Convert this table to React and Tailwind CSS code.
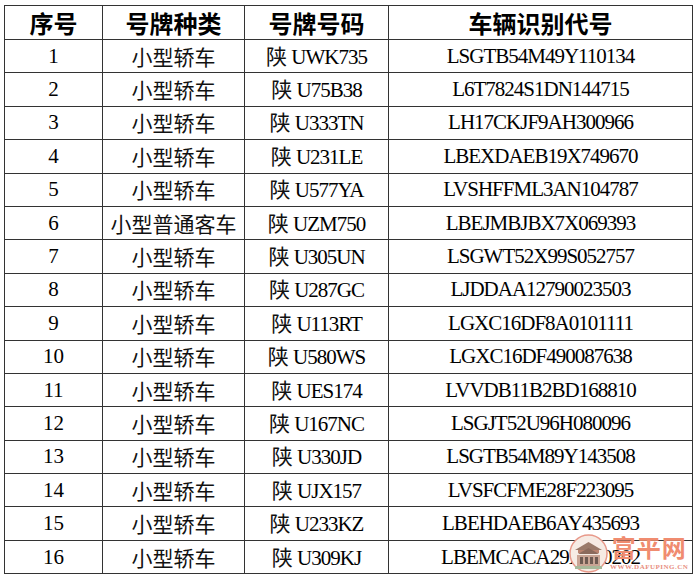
import React from 'react';

const rows = [
  ['1', '小型轿车', 'UWK735', 'LSGTB54M49Y110134'],
  ['2', '小型轿车', 'U75B38', 'L6T7824S1DN144715'],
  ['3', '小型轿车', 'U333TN', 'LH17CKJF9AH300966'],
  ['4', '小型轿车', 'U231LE', 'LBEXDAEB19X749670'],
  ['5', '小型轿车', 'U577YA', 'LVSHFFML3AN104787'],
  ['6', '小型普通客车', 'UZM750', 'LBEJMBJBX7X069393'],
  ['7', '小型轿车', 'U305UN', 'LSGWT52X99S052757'],
  ['8', '小型轿车', 'U287GC', 'LJDDAA12790023503'],
  ['9', '小型轿车', 'U113RT', 'LGXC16DF8A0101111'],
  ['10', '小型轿车', 'U580WS', 'LGXC16DF490087638'],
  ['11', '小型轿车', 'UES174', 'LVVDB11B2BD168810'],
  ['12', '小型轿车', 'U167NC', 'LSGJT52U96H080096'],
  ['13', '小型轿车', 'U330JD', 'LSGTB54M89Y143508'],
  ['14', '小型轿车', 'UJX157', 'LVSFCFME28F223095'],
  ['15', '小型轿车', 'U233KZ', 'LBEHDAEB6AY435693'],
  ['16', '小型轿车', 'U309KJ', 'LBEMCACA29X140202'],
];

const cjk = "font-['Noto_Sans_CJK_SC',sans-serif]";
const serif = "font-['Liberation_Serif','Noto_Sans_CJK_SC',serif]";

function Watermark() {
  return (
    <div className="absolute left-[569px] top-[534px] flex items-start gap-[2px] pointer-events-none">
      <svg width="39" height="39" viewBox="0 0 39 39">
        <circle cx="19.5" cy="19.5" r="18.5" fill="#f6ebe4" stroke="#e8998a" strokeWidth="1.5" />
        <path d="M6 16 L19.5 8 L33 16 Z" fill="#9a7a6a" />
        <rect x="9" y="16" width="21" height="3" fill="#b9826e" />
        <path d="M9 20 L19.5 14 L30 20 Z" fill="#8b6a5c" />
        <rect x="8" y="21" width="23" height="11" fill="#c9a494" />
        <rect x="11" y="23" width="3" height="7" fill="#6e5a52" />
        <rect x="16" y="23" width="3" height="7" fill="#6e5a52" />
        <rect x="21" y="23" width="3" height="7" fill="#6e5a52" />
        <rect x="26" y="23" width="3" height="7" fill="#6e5a52" />
        <rect x="6" y="32" width="27" height="3" fill="#a8b89a" />
      </svg>
      <div className="flex flex-col items-center">
        <span className={`${cjk} font-bold text-[24px] leading-[26px] text-[#f08c70] tracking-[1px]`}>富平网</span>
        <span className={`${serif} font-bold text-[7px] leading-[9px] text-[#e88e80] tracking-[0.5px] mt-[3px]`}>WWW.DAFUPING.CN</span>
      </div>
    </div>
  );
}

export default function App() {
  return (
    <div className="relative w-[697px] h-[579px] bg-white pt-[5px] pl-[4px] overflow-hidden">
      <table className="border-collapse table-fixed w-[688px] text-black">
        <colgroup>
          <col className="w-[98px]" />
          <col className="w-[142px]" />
          <col className="w-[144px]" />
          <col className="w-[304px]" />
        </colgroup>
        <thead>
          <tr className="h-[34px]">
            {['序号', '号牌种类', '号牌号码', '车辆识别代号'].map((h) => (
              <th key={h} className={`${cjk} border border-[#333] font-bold text-[24px] leading-none p-0 text-center align-middle`}>
                {h}
              </th>
            ))}
          </tr>
        </thead>
        <tbody>
          {rows.map(([n, type, plate, vin]) => (
            <tr key={n} className="h-[33.4px]">
              <td className={`${serif} border border-[#333] text-[21px] leading-none p-0 text-center align-middle`}>{n}</td>
              <td className={`${cjk} border border-[#333] text-[21px] leading-none p-0 text-center align-middle text-[#111]`}>{type}</td>
              <td className="border border-[#333] text-[21px] leading-none p-0 text-center align-middle whitespace-nowrap">
                <span className={`${cjk} text-[#111]`}>陕</span>
                <span className={`${serif} tracking-[-1px]`}> {plate}</span>
              </td>
              <td className={`${serif} border border-[#333] text-[21px] leading-none p-0 text-center align-middle tracking-[-1px]`}>{vin}</td>
            </tr>
          ))}
        </tbody>
      </table>
      <Watermark />
    </div>
  );
}
